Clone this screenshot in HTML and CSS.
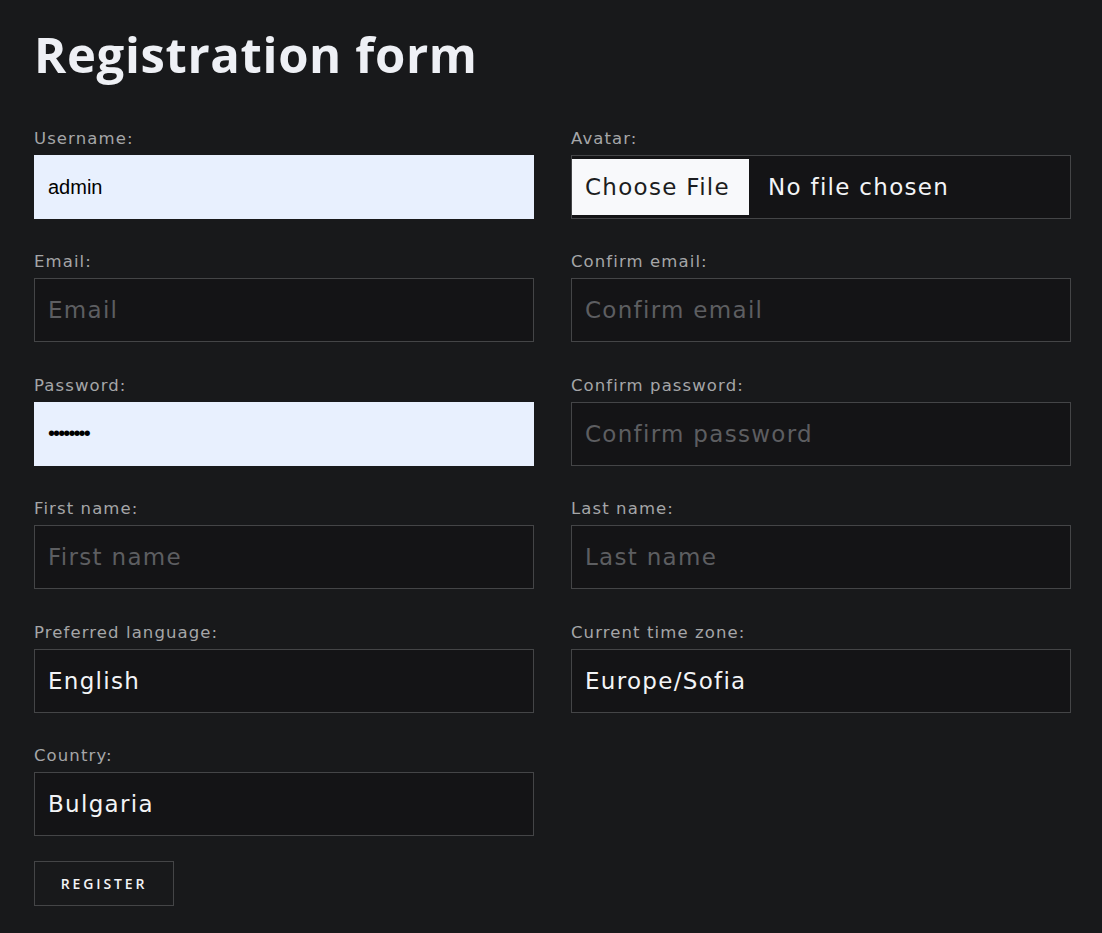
FILE: index.html
```html
<!DOCTYPE html>
<html lang="en">
<head>
<meta charset="utf-8">
<title>Registration form</title>
<link rel="stylesheet" href="styles.css">
</head>
<body>
<main class="page">
  <h1 class="title">Registration form</h1>
  <form class="form">
    <div class="grid">
      <div class="field">
        <label class="label">Username:</label>
        <input class="input autofill" type="text" value="admin">
      </div>
      <div class="field">
        <label class="label">Avatar:</label>
        <input class="input file" type="file">
      </div>
      <div class="field">
        <label class="label">Email:</label>
        <input class="input" type="text" placeholder="Email">
      </div>
      <div class="field">
        <label class="label">Confirm email:</label>
        <input class="input" type="text" placeholder="Confirm email">
      </div>
      <div class="field">
        <label class="label">Password:</label>
        <input class="input autofill pw" type="password" value="12345678">
      </div>
      <div class="field">
        <label class="label">Confirm password:</label>
        <input class="input" type="text" placeholder="Confirm password">
      </div>
      <div class="field">
        <label class="label">First name:</label>
        <input class="input" type="text" placeholder="First name">
      </div>
      <div class="field">
        <label class="label">Last name:</label>
        <input class="input" type="text" placeholder="Last name">
      </div>
      <div class="field">
        <label class="label">Preferred language:</label>
        <input class="input" type="text" value="English">
      </div>
      <div class="field">
        <label class="label">Current time zone:</label>
        <input class="input" type="text" value="Europe/Sofia">
      </div>
      <div class="field">
        <label class="label">Country:</label>
        <input class="input" type="text" value="Bulgaria">
      </div>
    </div>
    <button class="register" type="button">Register</button>
  </form>
</main>
</body>
</html>
```

FILE: styles.css
```css
html, body {
  margin: 0;
  padding: 0;
  background: #18191b;
}

.page {
  padding: 20px 31px 0 34px;
  font-family: "DejaVu Sans", "Open Sans", sans-serif;
}

.title {
  margin: 0;
  font-family: "Open Sans", sans-serif;
  font-weight: 700;
  font-size: 49px;
  line-height: 68px;
  letter-spacing: 0.65px;
  color: #eef0f5;
}

.form {
  margin-top: 40px;
}

.grid {
  display: grid;
  grid-template-columns: 500px 500px;
  column-gap: 37px;
  row-gap: 32.4px;
}

.field {
  display: flex;
  flex-direction: column;
}

.label {
  font-size: 16.5px;
  line-height: 22px;
  height: 22px;
  margin-bottom: 5px;
  letter-spacing: 1.1px;
  color: #a5a6a8;
}

.input {
  box-sizing: border-box;
  width: 500px;
  height: 64px;
  margin: 0;
  padding: 0 13px;
  border: 1px solid #444547;
  border-radius: 0;
  background: #141416;
  color: #f3f4f6;
  font-family: "DejaVu Sans", sans-serif;
  font-size: 23px;
  letter-spacing: 1.3px;
  outline: none;
}

.input::placeholder {
  color: #5d5e61;
}

.autofill {
  background: #e8f0fe;
  border-color: #e8f0fe;
  color: #000;
  font-family: "Liberation Sans", Arial, sans-serif;
  font-size: 20px;
  letter-spacing: 0;
}

.pw {
  font-size: 20px;
  letter-spacing: -1.9px;
}

.file {
  padding: 3px 0;
  color: #f3f4f6;
  font-size: 23px;
  line-height: 56px;
}

.file::file-selector-button {
  height: 56px;
  margin: 0 19px 0 0;
  padding: 0 19px 0 13px;
  border: none;
  border-radius: 0;
  background: #f8f9fb;
  color: #1c1d20;
  font-family: "DejaVu Sans", sans-serif;
  font-size: 23px;
  letter-spacing: 1.3px;
}

.register {
  margin-top: 25px;
  width: 140px;
  height: 45px;
  padding: 0;
  border: 1px solid #444547;
  background: transparent;
  color: #f3f4f6;
  font-family: "Open Sans", sans-serif;
  font-weight: 600;
  font-size: 14px;
  letter-spacing: 2.9px;
  text-transform: uppercase;
}
```
